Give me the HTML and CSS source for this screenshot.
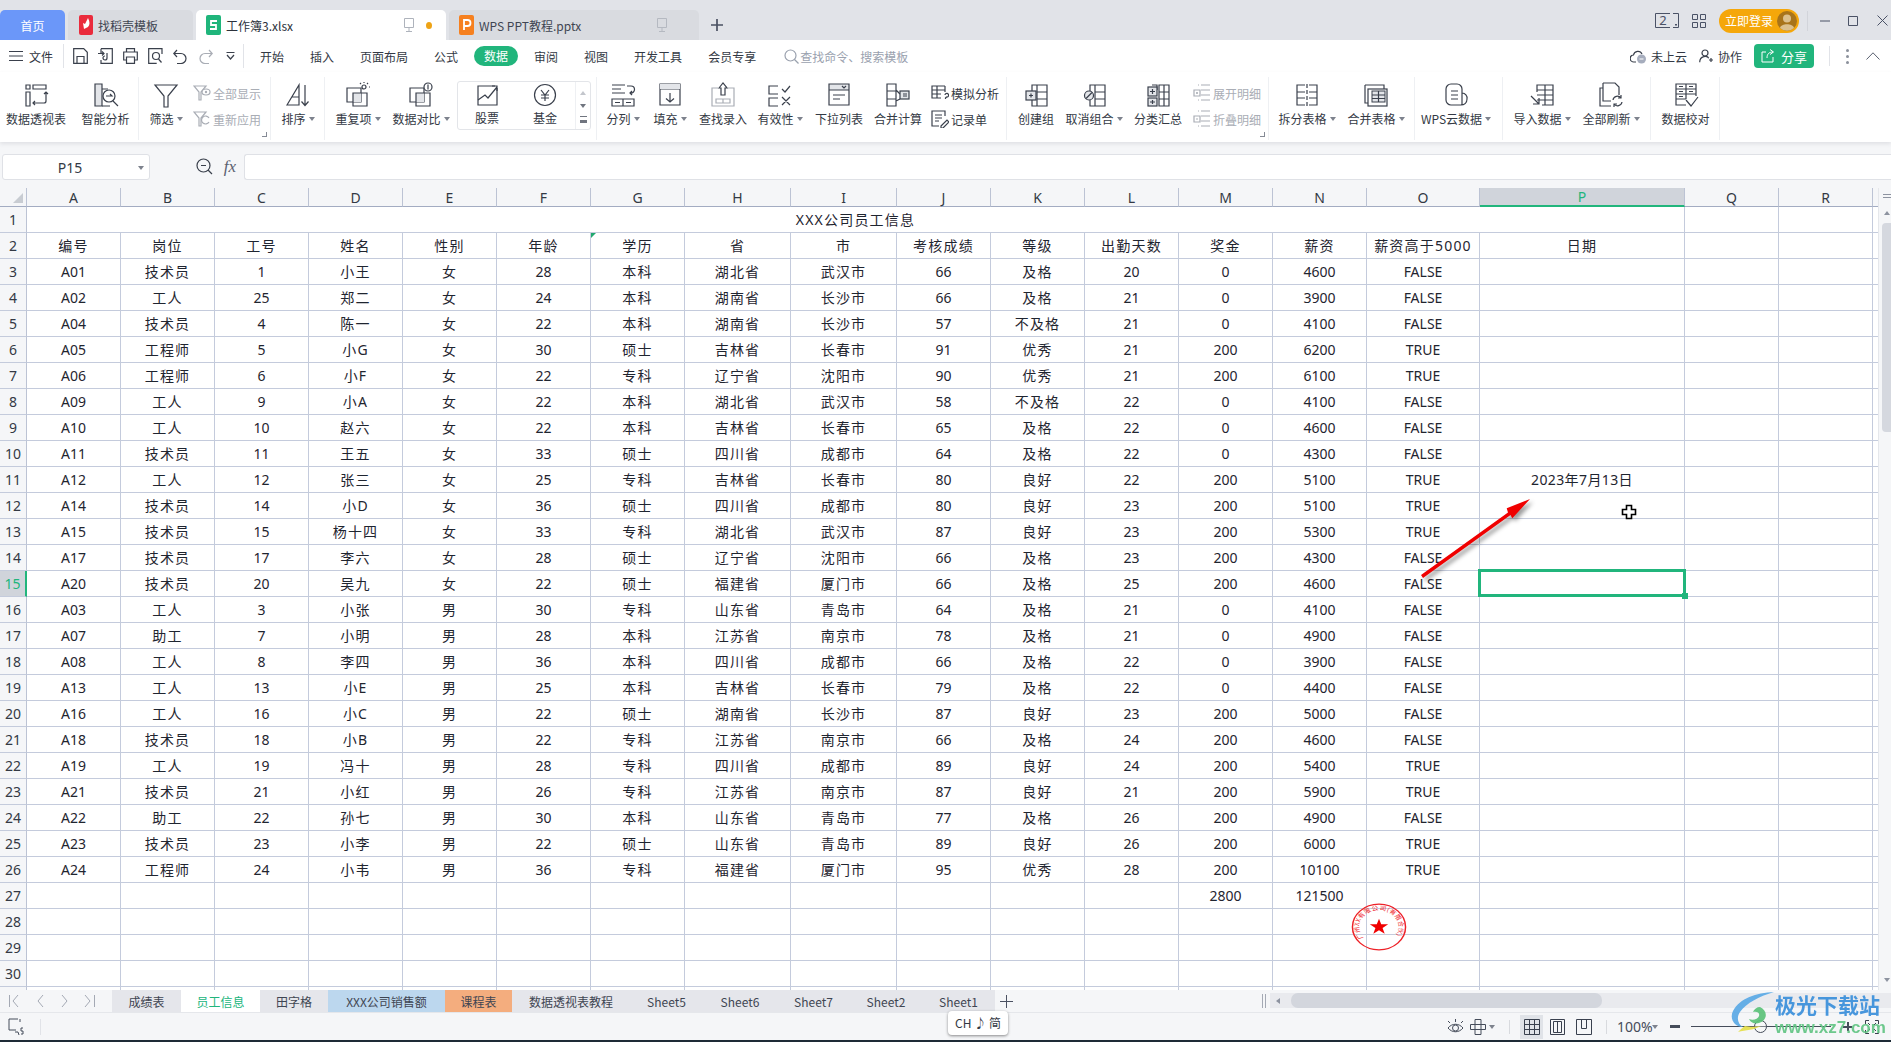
FILE: index.html
```html
<!DOCTYPE html>
<html lang="zh-CN">
<head>
<meta charset="utf-8">
<title>工作簿3.xlsx</title>
<link rel="stylesheet" href="styles.css">
</head>
<body>
<div class="tabbar">
  <div class="tab home">首页</div>
  <div class="tab t-tpl"><svg class="fileic" width="14" height="20" viewBox="0 0 14 20"><rect width="14" height="20" rx="2" fill="#ea2b3c"/><path d="M9 3 6 9l-2-1 1 6 4-2c2-2 2-5 0-9z" fill="#fff"/></svg><span>找稻壳模板</span></div>
  <div class="tab active"><svg class="fileic" width="15" height="20" viewBox="0 0 15 20"><rect width="15" height="20" rx="2" fill="#1fb57b"/><path d="M11 6H5v4h5v4H4" fill="none" stroke="#fff" stroke-width="1.8"/></svg><span>工作簿3.xlsx</span><svg class="mon m-a" width="12" height="16" viewBox="0 0 12 16"><path d="M1.500 1.500h9v9h-9zM6 11v3M3 14.500h6" fill="none" stroke="#aeb3bc"/></svg><i class="dot"></i></div>
  <div class="tab t-ppt"><svg class="fileic" width="15" height="20" viewBox="0 0 15 20"><rect width="15" height="20" rx="2" fill="#f6801f"/><path d="M5 15V5h3.500a2.800 2.800 0 0 1 0 6H5" fill="none" stroke="#fff" stroke-width="1.8"/></svg><span>WPS PPT教程.pptx</span><svg class="mon m-b" width="12" height="16" viewBox="0 0 12 16"><path d="M1.500 1.500h9v9h-9zM6 11v3M3 14.500h6" fill="none" stroke="#b5b9c1"/></svg></div>
  <svg class="plus" width="14" height="14" viewBox="0 0 14 14"><path d="M7 1v12M1 7h12" stroke="#4a5162" stroke-width="1.700"/></svg>
  <div class="tabright">
    <svg width="24" height="15" viewBox="0 0 24 15"><path d="M15 .5H.5v14H15M18 .5h5.500v14H18" fill="none" stroke="#4a5266"/><rect x="20" y="11" width="2" height="1.500" fill="#4a5266"/><text x="8" y="12" class="svgtxt" text-anchor="middle">2</text></svg>
    <svg class="apps" width="14" height="14" viewBox="0 0 14 14"><path d="M.5.500h5v5h-5zM8.500.500h5v5h-5zM.5 8.500h5v5h-5zM8.500 8.500h5v5h-5z" fill="none" stroke="#4a5266"/></svg>
    <div class="login"><span>立即登录</span><svg width="20" height="20" viewBox="0 0 20 20"><circle cx="10" cy="10" r="10" fill="#a8741a"/><circle cx="10" cy="7.500" r="4" fill="#dcc08c"/><path d="M3 17c1-5 13-5 14 0a10 10 0 0 1-14 0z" fill="#dcc08c"/></svg></div>
    <i class="vsep sep-win"></i>
    <svg class="win w1" width="10" height="2" viewBox="0 0 10 2"><path d="M0 1h10" stroke="#4a5266"/></svg>
    <svg class="win w2" width="10" height="10" viewBox="0 0 10 10"><path d="M.5.500h9v9h-9z" fill="none" stroke="#4a5266"/></svg>
    <svg class="win w3" width="11" height="11" viewBox="0 0 11 11"><path d="M.5.500l10 10M10.500.500l-10 10" stroke="#4a5266"/></svg>
  </div>
</div>

<div class="menubar">
  <svg class="m-burger" width="14" height="10" viewBox="0 0 14 10"><path d="M0 .5h14M0 5h14M0 9.500h14" stroke="#3a404c"/></svg>
  <span class="m-file">文件</span>
  <i class="vsep sep-a"></i>
  <div class="quick">
    <svg width="15" height="16" viewBox="0 0 15 16"><path d="M.7.700h10l3.600 3.600v11H.7zM4 15V8.500h7V15" class="ic"/></svg>
    <svg width="15" height="16" viewBox="0 0 15 16"><path d="M3 .7h11.300v14.600H3V12M3 5V.7M0 5.500h6M4 3.500l2 2-2 2M9 5v5a2 2 0 1 1-2-2" class="ic"/></svg>
    <svg width="15" height="16" viewBox="0 0 15 16"><path d="M3.500 4V.7h8V4M3.500 12H.7V4h13.600v8h-2.800M3.500 9h8v6.300h-8z" class="ic"/></svg>
    <svg width="15" height="16" viewBox="0 0 15 16"><path d="M14 6V.7H.7v14.600h8" class="ic"/><circle cx="8" cy="8" r="3.500" class="ic"/><path d="M10.500 11l3 3.500" class="ic"/></svg>
    <svg class="q-undo" width="14" height="15" viewBox="0 0 14 15"><path d="M4 1 .8 4.500 4 8M1 4.500h7a5 5 0 0 1 0 10H4" class="ic"/></svg>
    <svg class="q-redo" width="14" height="15" viewBox="0 0 14 15"><path d="M10 1l3.200 3.500L10 8M13 4.500H6a5 5 0 0 0 0 10h4" class="ic grey"/></svg>
    <svg class="q-more" width="9" height="8" viewBox="0 0 9 8"><path d="M.5.500h8M1 3l3.500 4L8 3" class="ic"/></svg>
  </div>
  <i class="vsep sep-b"></i>
  <nav class="nav">
    <span>开始</span><span>插入</span><span>页面布局</span><span>公式</span><span class="pill">数据</span><span>审阅</span><span>视图</span><span>开发工具</span><span>会员专享</span>
  </nav>
  <div class="search"><svg width="15" height="15" viewBox="0 0 15 15"><circle cx="6.500" cy="6.500" r="5.500" fill="none" stroke="#9aa1ae" stroke-width="1.200"/><path d="M10.500 10.500l4 4" stroke="#9aa1ae" stroke-width="1.200"/></svg><span>查找命令、搜索模板</span></div>
  <div class="menuright">
    <svg width="16" height="15" viewBox="0 0 16 15"><path d="M6 13H4a3.500 3.500 0 0 1-.5-7A4.500 4.500 0 0 1 12 5" class="ic"/><circle cx="11.500" cy="10" r="4.500" fill="#a6adbd"/><path d="M9.500 10h4" stroke="#fff"/></svg>
    <span class="mr1">未上云</span>
    <svg class="mr-col" width="14" height="14" viewBox="0 0 14 14"><circle cx="6" cy="4" r="3" class="ic"/><path d="M.7 13.300c0-7 8-7 9 -4M10 11h4M12 9v4" class="ic"/></svg>
    <span class="mr1">协作</span>
    <div class="share"><svg width="14" height="14" viewBox="0 0 14 14"><path d="M5 3H1v10h11V8M6 9c0-4 2-6 6-6M9 .5 12.500 3 9 5.500" fill="none" stroke="#fff"/></svg><span>分享</span></div>
    <i class="vsep sep-c"></i>
    <div class="dots"><i></i><i></i><i></i></div>
    <svg class="collapse" width="14" height="8" viewBox="0 0 14 8"><path d="M.5 7.500 7 .8l6.500 6.700" fill="none" stroke="#5a6070"/></svg>
  </div>
</div>

<div class="ribbon">
  <section class="grp w139">
    <div class="it w72"><svg class="rb" width="26" height="26" viewBox="0 0 26 26"><path d="M3 3h4v4H3zM10 3h13v4H10zM3 10h4v14H3zM23 10v9a2 2 0 0 1-2 2H10M21 12l2-2 2 2M12 19l-2 2 2 2" class="ic"/></svg><label>数据透视表</label></div>
    <div class="it w67"><svg class="rb" width="26" height="26" viewBox="0 0 26 26"><path d="M2 2h7v22H2z" class="ic fillg"/><path d="M9 7h6M9 24h8" class="ic"/><circle cx="16" cy="14" r="6" class="ic"/><path d="M20 19l5 5M13 14h6l-2-2" class="ic"/></svg><label>智能分析</label></div>
  </section>
  <section class="grp w132 rel">
    <div class="it w54"><svg class="rb" width="26" height="26" viewBox="0 0 26 26"><path d="M2 3h22L15 14v11h-4V14z" class="ic"/></svg><label>筛选<i class="caret"></i></label></div>
    <div class="smallcol">
      <div class="sm dis"><svg width="18" height="18" viewBox="0 0 18 18"><path d="M1 2h12L8 8v8H6V8z" class="ic grey"/><ellipse cx="13" cy="8" rx="4" ry="3" class="ic grey"/><circle cx="13" cy="8" r="1.200" fill="#a9adb5"/></svg><span>全部显示</span></div>
      <div class="sm dis"><svg width="18" height="18" viewBox="0 0 18 18"><path d="M1 2h12L8 8v8H6V8z" class="ic grey"/><path d="M16 8a4 4 0 1 0 0 4" class="ic grey"/></svg><span>重新应用</span></div>
    </div>
    <i class="launch"></i>
  </section>
  <section class="grp w54">
    <div class="it w54"><svg class="rb" width="26" height="26" viewBox="0 0 26 26"><path d="M2 23 14 3v20zM7 15h7M20 3v20M16.500 19.500 20 23.500l3.500-4" class="ic"/></svg><label>排序<i class="caret"></i></label></div>
  </section>
  <section class="grp w272">
    <div class="it w66"><svg class="rb rbw" width="26" height="26" viewBox="0 0 26 26"><path d="M2 6h14v14H2z" class="ic"/><path d="M8 11h8v9H8z" fill="#e3e5e9"/><path d="M8 11h14v13H8z" class="ic"/><circle cx="19" cy="5" r="2" class="ic"/><path d="M19 0v1M24 5h1M23 1l-1 1M15 1l1 1" class="ic"/></svg><label>重复项<i class="caret"></i></label></div>
    <div class="it w60"><svg class="rb rbw" width="26" height="26" viewBox="0 0 26 26"><path d="M2 6h14v14H2z" class="ic"/><path d="M8 11h8v9H8z" fill="#e3e5e9"/><path d="M8 11h14v13H8z" class="ic"/><circle cx="20" cy="5" r="4" fill="#fff" stroke="#3a404c" stroke-width="1.200"/><path d="M20 2.500v5" class="ic"/></svg><label>数据对比<i class="caret"></i></label></div>
    <div class="gallery">
      <div class="it w58"><svg class="rb" width="26" height="26" viewBox="0 0 26 26"><path d="M21 4H4v19h19V6" class="ic"/><path d="M4 18l7-5 3 3 9-11M18 4h5v5" class="ic"/></svg><label>股票</label></div>
      <div class="it w58"><svg class="rb" width="26" height="26" viewBox="0 0 26 26"><circle cx="13" cy="13" r="10.500" class="ic"/><path d="M9 8l4 5 4-5M13 13v6M9 13h8M9 16h8" class="ic"/></svg><label>基金</label></div>
      <div class="gscroll"><i class="up"></i><i class="down"></i><i class="more"></i></div>
    </div>
  </section>
  <section class="grp w410">
    <div class="it w50 ml2"><svg class="rb rbw" width="26" height="26" viewBox="0 0 26 26"><path d="M2 3h13M2 7h9M2 11h13M17 4h4a3 3 0 0 1 0 7h-1M22 9l-2 2 2 2M2 17h22v7H2zM13 17v7M5 20.500h5M16 20.500h5" class="ic"/></svg><label>分列<i class="caret"></i></label></div>
    <div class="it w42"><svg class="rb" width="26" height="26" viewBox="0 0 26 26"><path d="M3 2h20v21H3zM3 7h20" class="ic"/><rect x="3" y="2" width="20" height="5" fill="#e3e5e9"/><path d="M13 11v9M9 16.500l4 3.500 4-3.500" class="ic"/></svg><label>填充<i class="caret"></i></label></div>
    <div class="it w64"><svg class="rb rbw" width="26" height="26" viewBox="0 0 26 26"><path d="M8 6H2v18h22V6h-6M6 17h14v4H6zM13 17v4" class="icg"/><path d="M9 6l4-5 4 5h-2v7h-4V6z" class="ic"/></svg><label>查找录入</label></div>
    <div class="it w50"><svg class="rb rbw" width="26" height="26" viewBox="0 0 26 26"><path d="M11 4H2v8h9M11 16H2v8h9M15 7l3 3 5-6M15 15l8 8M23 15l-8 8" class="ic"/></svg><label>有效性<i class="caret"></i></label></div>
    <div class="it w68"><svg class="rb" width="26" height="26" viewBox="0 0 26 26"><rect x="3" y="2" width="20" height="6" fill="#e3e5e9"/><path d="M3 2h20v21H3zM3 8h20M7 13h12M7 17h7M16 4l2 2 2-2" class="ic"/></svg><label>下拉列表</label></div>
    <div class="it w50"><svg class="rb rbw" width="26" height="26" viewBox="0 0 26 26"><path d="M2 2h9v22H2zM2 9h9M2 17h9M11 8l4 4M11 19l4-2" class="ic"/><rect x="15" y="9" width="9" height="8" fill="#e3e5e9" stroke="#3a404c" stroke-width="1.200"/><path d="M18 12h4M18 14h4" class="ic"/></svg><label>合并计算</label></div>
    <div class="smallcol sc8">
      <div class="sm"><svg width="18" height="18" viewBox="0 0 18 18"><path d="M14 2H1v12h9M14 2v6M1 6h13M6 2v12M1 10h9M14 11a1.800 1.800 0 1 1 1.500 2l-1 1v1" class="ic"/></svg><span>模拟分析</span></div>
      <div class="sm"><svg width="18" height="18" viewBox="0 0 18 18"><path d="M14 6V1H1v15h7M4 5h7M4 8h7M4 11h4M10 16l6-6 2 2-6 6h-2z" class="ic"/></svg><span>记录单</span></div>
    </div>
  </section>
  <section class="grp w262 rel">
    <div class="it w58"><svg class="rb" width="26" height="26" viewBox="0 0 26 26"><path d="M14 3h10v21H14zM14 10h10M14 17h10M14 3H9v6M14 24H9v-6" class="ic"/><rect x="3" y="9" width="10" height="9" fill="#e3e5e9" stroke="#3a404c" stroke-width="1.200"/><path d="M6 13.500h4M8 11.500v4" class="ic"/></svg><label>创建组</label></div>
    <div class="it w58"><svg class="rb" width="26" height="26" viewBox="0 0 26 26"><path d="M14 3h10v21H14zM14 10h10M14 17h10M14 3H9v6M14 24H9v-6" class="ic"/><circle cx="8" cy="13.500" r="4.500" fill="#e3e5e9" stroke="#3a404c" stroke-width="1.200"/><path d="M5 16.500l6-6" class="ic"/></svg><label>取消组合<i class="caret"></i></label></div>
    <div class="it w70"><svg class="rb" width="26" height="26" viewBox="0 0 26 26"><path d="M14 3h10v21H14zM19 3v21M14 10h10M14 17h10M7 3h5v5" class="ic"/><rect x="3" y="5" width="9" height="9" fill="#e3e5e9" stroke="#3a404c" stroke-width="1.200"/><rect x="3" y="16" width="9" height="8" fill="#e3e5e9" stroke="#3a404c" stroke-width="1.200"/><path d="M5 9.500h5M7.500 7v5M5 20h5M7.500 18v4" class="ic"/></svg><label>分类汇总</label></div>
    <div class="smallcol">
      <div class="sm dis"><svg width="18" height="18" viewBox="0 0 18 18"><path d="M8 1h9M8 6h9M8 11h9M8 16h9M5 1h1M5 16h1M1 6h6v6H1zM3 9h2M4 8v2" class="icg"/></svg><span>展开明细</span></div>
      <div class="sm dis"><svg width="18" height="18" viewBox="0 0 18 18"><path d="M8 1h9M8 6h9M8 11h9M8 16h9M5 1h1M5 16h1M1 6h6v6H1zM3 9h2" class="icg"/></svg><span>折叠明细</span></div>
    </div>
    <i class="launch"></i>
  </section>
  <section class="grp w146">
    <div class="it w76"><svg class="rb" width="26" height="26" viewBox="0 0 26 26"><path d="M11 3H3v20h8M15 3h8v20h-8M3 10h8M3 16h8M15 10h8M15 16h8" class="ic"/><path d="M13 2v22" class="ic dash"/></svg><label>拆分表格<i class="caret"></i></label></div>
    <div class="it w62"><svg class="rb" width="26" height="26" viewBox="0 0 26 26"><path d="M2 3h19v19" class="ic"/><path d="M2 3v18h3" class="ic"/><rect x="5" y="7" width="19" height="17" fill="#fff" stroke="#3a404c" stroke-width="1.200"/><rect x="9" y="9" width="13" height="11" fill="#e3e5e9" stroke="#3a404c"/><path d="M9 13h13M9 16.500h13M15.500 9v11" class="ic"/></svg><label>合并表格<i class="caret"></i></label></div>
  </section>
  <section class="grp w88">
    <div class="it w82"><svg class="rb" width="26" height="26" viewBox="0 0 26 26"><path d="M8 2h6a5 5 0 0 1 5 5v4a5 5 0 0 1 5 6c0 4-3 6-6 6H8a5 5 0 0 1-5-5V7a5 5 0 0 1 5-5zM19 11v12M8 9h7M8 13h7M8 17h7" class="ic"/></svg><label>WPS云数据<i class="caret"></i></label></div>
  </section>
  <section class="grp w148">
    <div class="it w78"><svg class="rb" width="26" height="26" viewBox="0 0 26 26"><path d="M8 10V3h16v20H13M8 8h16M8 13h16M8 18h16M16 3v20" class="ic"/><path d="M2 14l8 8M4 22h6v-6" class="ic"/></svg><label>导入数据<i class="caret"></i></label></div>
    <div class="it w60"><svg class="rb" width="26" height="26" viewBox="0 0 26 26"><path d="M5 6H2v18h11M5 1h12l4 4v8M5 1v18h8" class="ic"/><path d="M15 18a4.500 4.500 0 0 1 8-2M24 20a4.500 4.500 0 0 1-8 2M23 13v3h-3M16 25v-3h3" class="ic"/></svg><label>全部刷新<i class="caret"></i></label></div>
  </section>
  <section class="grp w69">
    <div class="it w69"><svg class="rb" width="26" height="26" viewBox="0 0 26 26"><path d="M13 23H3V2h20v12M3 7h20M3 12h20M3 17h10M13 2v15M6 4.500h4M16 4.500h4M6 9.500h4M16 9.500h4M6 14.500h4M13 18l5 6 7-9" class="ic"/></svg><label>数据校对</label></div>
  </section>
</div>

<div class="formula">
  <div class="namebox"><span>P15</span><i class="caret"></i></div>
  <svg class="zoomic" width="17" height="17" viewBox="0 0 17 17"><circle cx="7.500" cy="7.500" r="6.500" class="ic"/><path d="M5 7.500h5M12 12l4 4" class="ic"/></svg>
  <span class="fx">fx</span>
  <div class="fxinput"></div>
</div>

<div class="sheetrow">
  <div class="gridwrap">
    <table class="grid">
      <colgroup><col class="col-h"><col class="col-n"><col class="col-n"><col class="col-n"><col class="col-n"><col class="col-n"><col class="col-n"><col class="col-n"><col class="col-w"><col class="col-w"><col class="col-n"><col class="col-n"><col class="col-n"><col class="col-n"><col class="col-n"><col class="col-o"><col class="col-p"><col class="col-n"><col class="col-n"><col class="col-t"></colgroup>
      <thead><tr><th class="corner"><i></i></th><th>A</th><th>B</th><th>C</th><th>D</th><th>E</th><th>F</th><th>G</th><th>H</th><th>I</th><th>J</th><th>K</th><th>L</th><th>M</th><th>N</th><th>O</th><th class="hsel">P</th><th>Q</th><th>R</th><th></th></tr></thead>
      <tbody>
<tr><th>1</th><td colspan="16">XXX公司员工信息</td><td></td><td></td><td></td></tr>
<tr><th>2</th><td>编号</td><td>岗位</td><td>工号</td><td>姓名</td><td>性别</td><td>年龄</td><td class="flag">学历</td><td>省</td><td>市</td><td>考核成绩</td><td>等级</td><td>出勤天数</td><td>奖金</td><td>薪资</td><td>薪资高于5000</td><td>日期</td><td></td><td></td><td></td></tr>
<tr><th>3</th><td>A01</td><td>技术员</td><td>1</td><td>小王</td><td>女</td><td>28</td><td>本科</td><td>湖北省</td><td>武汉市</td><td>66</td><td>及格</td><td>20</td><td>0</td><td>4600</td><td>FALSE</td><td></td><td></td><td></td><td></td></tr>
<tr><th>4</th><td>A02</td><td>工人</td><td>25</td><td>郑二</td><td>女</td><td>24</td><td>本科</td><td>湖南省</td><td>长沙市</td><td>66</td><td>及格</td><td>21</td><td>0</td><td>3900</td><td>FALSE</td><td></td><td></td><td></td><td></td></tr>
<tr><th>5</th><td>A04</td><td>技术员</td><td>4</td><td>陈一</td><td>女</td><td>22</td><td>本科</td><td>湖南省</td><td>长沙市</td><td>57</td><td>不及格</td><td>21</td><td>0</td><td>4100</td><td>FALSE</td><td></td><td></td><td></td><td></td></tr>
<tr><th>6</th><td>A05</td><td>工程师</td><td>5</td><td>小G</td><td>女</td><td>30</td><td>硕士</td><td>吉林省</td><td>长春市</td><td>91</td><td>优秀</td><td>21</td><td>200</td><td>6200</td><td>TRUE</td><td></td><td></td><td></td><td></td></tr>
<tr><th>7</th><td>A06</td><td>工程师</td><td>6</td><td>小F</td><td>女</td><td>22</td><td>专科</td><td>辽宁省</td><td>沈阳市</td><td>90</td><td>优秀</td><td>21</td><td>200</td><td>6100</td><td>TRUE</td><td></td><td></td><td></td><td></td></tr>
<tr><th>8</th><td>A09</td><td>工人</td><td>9</td><td>小A</td><td>女</td><td>22</td><td>本科</td><td>湖北省</td><td>武汉市</td><td>58</td><td>不及格</td><td>22</td><td>0</td><td>4100</td><td>FALSE</td><td></td><td></td><td></td><td></td></tr>
<tr><th>9</th><td>A10</td><td>工人</td><td>10</td><td>赵六</td><td>女</td><td>22</td><td>本科</td><td>吉林省</td><td>长春市</td><td>65</td><td>及格</td><td>22</td><td>0</td><td>4600</td><td>FALSE</td><td></td><td></td><td></td><td></td></tr>
<tr><th>10</th><td>A11</td><td>技术员</td><td>11</td><td>王五</td><td>女</td><td>33</td><td>硕士</td><td>四川省</td><td>成都市</td><td>64</td><td>及格</td><td>22</td><td>0</td><td>4300</td><td>FALSE</td><td></td><td></td><td></td><td></td></tr>
<tr><th>11</th><td>A12</td><td>工人</td><td>12</td><td>张三</td><td>女</td><td>25</td><td>专科</td><td>吉林省</td><td>长春市</td><td>80</td><td>良好</td><td>22</td><td>200</td><td>5100</td><td>TRUE</td><td>2023年7月13日</td><td></td><td></td><td></td></tr>
<tr><th>12</th><td>A14</td><td>技术员</td><td>14</td><td>小D</td><td>女</td><td>36</td><td>硕士</td><td>四川省</td><td>成都市</td><td>80</td><td>良好</td><td>23</td><td>200</td><td>5100</td><td>TRUE</td><td></td><td></td><td></td><td></td></tr>
<tr><th>13</th><td>A15</td><td>技术员</td><td>15</td><td>杨十四</td><td>女</td><td>33</td><td>专科</td><td>湖北省</td><td>武汉市</td><td>87</td><td>良好</td><td>23</td><td>200</td><td>5300</td><td>TRUE</td><td></td><td></td><td></td><td></td></tr>
<tr><th>14</th><td>A17</td><td>技术员</td><td>17</td><td>李六</td><td>女</td><td>28</td><td>硕士</td><td>辽宁省</td><td>沈阳市</td><td>66</td><td>及格</td><td>23</td><td>200</td><td>4300</td><td>FALSE</td><td></td><td></td><td></td><td></td></tr>
<tr><th class="rsel">15</th><td>A20</td><td>技术员</td><td>20</td><td>吴九</td><td>女</td><td>22</td><td>硕士</td><td>福建省</td><td>厦门市</td><td>66</td><td>及格</td><td>25</td><td>200</td><td>4600</td><td>FALSE</td><td class="sel"></td><td></td><td></td><td></td></tr>
<tr><th>16</th><td>A03</td><td>工人</td><td>3</td><td>小张</td><td>男</td><td>30</td><td>专科</td><td>山东省</td><td>青岛市</td><td>64</td><td>及格</td><td>21</td><td>0</td><td>4100</td><td>FALSE</td><td></td><td></td><td></td><td></td></tr>
<tr><th>17</th><td>A07</td><td>助工</td><td>7</td><td>小明</td><td>男</td><td>28</td><td>本科</td><td>江苏省</td><td>南京市</td><td>78</td><td>及格</td><td>21</td><td>0</td><td>4900</td><td>FALSE</td><td></td><td></td><td></td><td></td></tr>
<tr><th>18</th><td>A08</td><td>工人</td><td>8</td><td>李四</td><td>男</td><td>36</td><td>本科</td><td>四川省</td><td>成都市</td><td>66</td><td>及格</td><td>22</td><td>0</td><td>3900</td><td>FALSE</td><td></td><td></td><td></td><td></td></tr>
<tr><th>19</th><td>A13</td><td>工人</td><td>13</td><td>小E</td><td>男</td><td>25</td><td>本科</td><td>吉林省</td><td>长春市</td><td>79</td><td>及格</td><td>22</td><td>0</td><td>4400</td><td>FALSE</td><td></td><td></td><td></td><td></td></tr>
<tr><th>20</th><td>A16</td><td>工人</td><td>16</td><td>小C</td><td>男</td><td>22</td><td>硕士</td><td>湖南省</td><td>长沙市</td><td>87</td><td>良好</td><td>23</td><td>200</td><td>5000</td><td>FALSE</td><td></td><td></td><td></td><td></td></tr>
<tr><th>21</th><td>A18</td><td>技术员</td><td>18</td><td>小B</td><td>男</td><td>22</td><td>专科</td><td>江苏省</td><td>南京市</td><td>66</td><td>及格</td><td>24</td><td>200</td><td>4600</td><td>FALSE</td><td></td><td></td><td></td><td></td></tr>
<tr><th>22</th><td>A19</td><td>工人</td><td>19</td><td>冯十</td><td>男</td><td>28</td><td>专科</td><td>四川省</td><td>成都市</td><td>89</td><td>良好</td><td>24</td><td>200</td><td>5400</td><td>TRUE</td><td></td><td></td><td></td><td></td></tr>
<tr><th>23</th><td>A21</td><td>技术员</td><td>21</td><td>小红</td><td>男</td><td>26</td><td>专科</td><td>江苏省</td><td>南京市</td><td>87</td><td>良好</td><td>21</td><td>200</td><td>5900</td><td>TRUE</td><td></td><td></td><td></td><td></td></tr>
<tr><th>24</th><td>A22</td><td>助工</td><td>22</td><td>孙七</td><td>男</td><td>30</td><td>本科</td><td>山东省</td><td>青岛市</td><td>77</td><td>及格</td><td>26</td><td>200</td><td>4900</td><td>FALSE</td><td></td><td></td><td></td><td></td></tr>
<tr><th>25</th><td>A23</td><td>技术员</td><td>23</td><td>小李</td><td>男</td><td>22</td><td>硕士</td><td>山东省</td><td>青岛市</td><td>89</td><td>良好</td><td>26</td><td>200</td><td>6000</td><td>TRUE</td><td></td><td></td><td></td><td></td></tr>
<tr><th>26</th><td>A24</td><td>工程师</td><td>24</td><td>小韦</td><td>男</td><td>36</td><td>专科</td><td>福建省</td><td>厦门市</td><td>95</td><td>优秀</td><td>28</td><td>200</td><td>10100</td><td>TRUE</td><td></td><td></td><td></td><td></td></tr>
<tr><th>27</th><td></td><td></td><td></td><td></td><td></td><td></td><td></td><td></td><td></td><td></td><td></td><td></td><td>2800</td><td>121500</td><td></td><td></td><td></td><td></td><td></td></tr>
<tr><th>28</th><td></td><td></td><td></td><td></td><td></td><td></td><td></td><td></td><td></td><td></td><td></td><td></td><td></td><td></td><td></td><td></td><td></td><td></td><td></td></tr>
<tr><th>29</th><td></td><td></td><td></td><td></td><td></td><td></td><td></td><td></td><td></td><td></td><td></td><td></td><td></td><td></td><td></td><td></td><td></td><td></td><td></td></tr>
<tr><th>30</th><td></td><td></td><td></td><td></td><td></td><td></td><td></td><td></td><td></td><td></td><td></td><td></td><td></td><td></td><td></td><td></td><td></td><td></td><td></td></tr>
<tr><th></th><td></td><td></td><td></td><td></td><td></td><td></td><td></td><td></td><td></td><td></td><td></td><td></td><td></td><td></td><td></td><td></td><td></td><td></td><td></td></tr>
      </tbody>
    </table>
  </div>
  <div class="vscroll"><i class="split"></i><i class="up"></i><i class="thumb"></i><i class="down"></i></div>
</div>

<div class="sheetbar">
  <div class="sheetnav">
    <svg width="112" height="14" viewBox="0 0 112 14"><path d="M9.500 1v12M18 1l-5 6 5 6M43 1l-5 6 5 6M62 1l5 6-5 6M85 1l5 6-5 6M94.500 1v12" fill="none" stroke="#a4a9b4"/></svg>
  </div>
  <div class="sheets">
    <span class="st s69">成绩表</span><span class="st s79 cur">员工信息</span><span class="st s68">田字格</span><span class="st s117 blue">XXX公司销售额</span><span class="st s67 orange">课程表</span><span class="st s118">数据透视表教程</span><span class="st s73">Sheet5</span><span class="st s74">Sheet6</span><span class="st s73">Sheet7</span><span class="st s72">Sheet2</span><span class="st s73">Sheet1</span>
  </div>
  <svg class="addsheet" width="13" height="13" viewBox="0 0 13 13"><path d="M6.500 0v13M0 6.500h13" stroke="#4a5162"/></svg>
  <div class="hsplit"></div>
  <div class="htrack"><i class="left"></i><i class="hthumb"></i></div>
</div>

<footer class="status">
  <svg class="js" width="17" height="18" viewBox="0 0 17 18"><path d="M10 1H1v11h7M12 1v3M7 14h3l1 3M15 10h-2v3h2v3h-2" fill="none" stroke="#454c5a"/></svg>
  <i class="vsep sep-d"></i>
  <div class="statusright">
    <svg width="17" height="17" viewBox="0 0 17 17"><path d="M1 10c4-5 11-5 15 0-4 5-11 5-15 0zM1 3l2 2M16 3l-2 2M8.500 1v3" fill="none" stroke="#454c5a"/><circle cx="8.500" cy="10" r="3" fill="none" stroke="#454c5a"/></svg>
    <svg class="s-cross" width="16" height="16" viewBox="0 0 16 16"><path d="M5 .5h6v5h4.500v5H11v5H5v-5H.5v-5H5zM5 5.500h6v5H5z" fill="none" stroke="#454c5a"/></svg>
    <i class="caret cr-s"></i>
    <i class="vsep sep-e"></i>
    <div class="view-on"><svg width="16" height="16" viewBox="0 0 16 16"><path d="M.5.500h15v15H.5zM.5 5.500h15M.5 10.500h15M5.500.5v15M10.500.5v15" fill="none" stroke="#39404e"/></svg></div>
    <svg class="v2" width="15" height="16" viewBox="0 0 15 16"><path d="M.5.500h14v15H.5zM3.500 2.500h8v11h-8zM7.500 2.500v11" fill="none" stroke="#39404e"/></svg>
    <svg class="v3" width="16" height="16" viewBox="0 0 16 16"><path d="M.5.500h15v15H.5zM5.500.5v9h5V.5" fill="none" stroke="#39404e"/></svg>
    <i class="vsep sep-f"></i>
    <span class="pct">100%</span><i class="caret cr-p"></i>
    <i class="zminus"></i>
    <div class="slider"><i></i></div>
    <i class="zplus"></i>
    <svg class="fullsc" width="14" height="14" viewBox="0 0 14 14"><path d="M.5 4V.5H4M10 .5h3.500V4M13.500 10v3.500H10M4 13.500H.5V10M3 3l2 2M11 3 9 5M11 11 9 9M3 11l2-2" fill="none" stroke="#39404e"/></svg>
  </div>
</footer>
<div class="strip"></div>

<div class="ime">CH ♪ 简</div>

<svg class="arrow" width="130" height="100" viewBox="0 0 130 100"><path d="M11 85 98 22.500 96.700 18.300 120 9 102.300 28.300 100.500 25 13 88z" fill="#f00000"/></svg>

<svg class="cursor" width="16" height="16" viewBox="0 0 16 16"><path d="M5.500 1.500h5v4h4v5h-4v4h-5v-4h-4v-5h4z" fill="#fff" stroke="#000" stroke-width="1.600"/></svg>

<svg class="stamp" width="56" height="48" viewBox="0 0 58 58" preserveAspectRatio="none">
  <defs><path id="stamparc" d="M13 42A20.500 20.500 0 1 1 45 42"/></defs>
  <circle cx="29" cy="29" r="27.500" fill="none" stroke="#ee2027" stroke-width="1.500"/>
  <text class="stamptext"><textPath href="#stamparc" textLength="88" lengthAdjust="spacing">广州XX有限公司(有限合伙)</textPath></text>
  <path d="M29 19l2.300 6.800h7.200l-5.800 4.300 2.200 7L29 32.800l-5.900 4.300 2.200-7-5.800-4.300h7.200z" fill="#f00000"/>
</svg>

<div class="watermark">
  <svg width="46" height="42" viewBox="0 0 46 42"><path d="M44 1C26 2 10 7 3 20c-4 8 2 16 10 16-5-3-7-9-3-15C16 12 30 5 44 1z" fill="#5aa9e6"/><path d="M30 16c6 3 8 9 3 14-5 4-12 3-14-2 4 2 9 0 10-3 1-3-2-5-6-4 1-3 4-5 7-5z" fill="#5cc27a"/><path d="M8 41c8-2 16-2 23-6-5 1-12 1-16 0-3 2-5 4-7 6z" fill="#e6e04a"/></svg>
  <div class="wmtext"><b>极光下载站</b><em>www.xz7.com</em></div>
</div>
</body>
</html>
```
FILE: styles.css
```css
*{box-sizing:border-box}
html,body{margin:0;padding:0}
body{width:1891px;height:1042px;overflow:hidden;position:relative;background:#f5f6f8;color:#333944;font:12px "Noto Sans CJK SC","Noto Sans",sans-serif}
i{display:block;font-style:normal}
svg{display:block;flex:none}
.ic{fill:none;stroke:#3a404c;stroke-width:1.200}
.ic.grey,.icg{fill:none;stroke:#a9adb5;stroke-width:1.200}
.ic.fillg{fill:#e3e5e9}
.ic.dash{stroke-dasharray:4 2}
.svgtxt{font:13px "Noto Sans",sans-serif;fill:#4a5266}
.vsep{width:1px;background:#e1e3e8;flex:none}

/* tab bar */
.tabbar{height:40px;background:#e1e3e8;display:flex;align-items:flex-end}
.tab{height:30px;border-radius:5px 5px 0 0;display:flex;align-items:center;background:#d9dbe0;color:#3f4552;margin-right:3px;flex:none}
.home{width:65px;justify-content:center;background:#6b97f9;color:#fff}
.t-tpl{width:125px;padding-left:11px;gap:5px}
.active{width:250px;padding-left:10px;gap:5px;background:#fff;color:#2c313b}
.t-ppt{width:250px;padding-left:10px;gap:5px;color:#3f4552}
.m-a{margin-left:auto}
.m-b{margin:0 31px 0 auto}
.dot{width:6px;height:7px;border-radius:50%;background:#eea315;margin:0 14px 0 6px}
.plus{align-self:center;margin:10px 0 0 8px}
.tabright{margin-left:auto;align-self:stretch;display:flex;align-items:center;padding:1px 3px 0 0}
.apps{margin-left:13px}
.login{margin-left:13px;width:80px;height:24px;border-radius:12px;background:#f5a70a;color:#fff;display:flex;align-items:center;justify-content:space-between;font-size:12px;padding:0 2px 0 6px}
.login span{white-space:nowrap}
.sep-win{height:20px;background:#d2d4da;margin-left:8px}
.win.w1{margin-left:12px}
.win.w2{margin-left:18px}
.win.w3{margin-left:19px}

/* menu bar */
.menubar{height:32px;background:#fff;display:flex;align-items:center}
.m-burger{margin-left:9px}
.m-file{margin-left:6px;width:24px;color:#2f343e}
.sep-a{height:24px;margin-left:10px}
.quick{display:flex;align-items:center;gap:10px;margin-left:9px}
.q-redo{margin-left:2px}
.q-more{margin-left:3px}
.sep-b{height:24px;margin-left:8px}
.nav{display:flex;align-items:center;margin-left:3px;color:#333944}
.nav span{padding:0 13px;white-space:nowrap}
.nav .pill{margin:0 3px;padding:0 10px;height:20px;line-height:20px;border-radius:10px;background:#21b57c;color:#fff}
.search{display:flex;align-items:center;gap:1px;margin-left:15px;color:#9aa1ae}
.menuright{margin-left:auto;display:flex;align-items:center}
.mr1{margin-left:5px;color:#333944}
.mr-col{margin-left:12px}
.share{margin-left:12px;width:60px;height:24px;border-radius:4px;background:#21b57c;color:#fff;display:flex;align-items:center;justify-content:center;gap:6px;font-size:13px}
.sep-c{height:20px;margin-left:15px}
.dots{margin-left:16px;display:flex;flex-direction:column;gap:3px}
.dots i{width:3px;height:3px;background:#8b909b;border-radius:50%}
.collapse{margin:0 11px 0 17px}

/* ribbon */
.ribbon{height:70px;background:#fff;display:flex;align-items:flex-start;padding-top:5px;position:relative;z-index:2;box-shadow:0 2px 4px rgba(70,75,90,.12)}
.grp{height:63px;display:flex;border-right:1px solid #eef0f3;flex:none}
.rel{position:relative}
.it{display:flex;flex-direction:column;align-items:center;padding-top:5px;flex:none}
.rb{height:26px}
.rbw{width:26px}
.it label{height:22px;line-height:22px;white-space:nowrap;color:#333944;display:flex;align-items:center}
.caret{width:0;height:0;border-left:3px solid transparent;border-right:3px solid transparent;border-top:4px solid #7d828d;margin-left:3px}
.smallcol{padding-top:3px;flex:none;display:flex;flex-direction:column}
.sc8{margin-left:8px}
.sm{height:26px;display:flex;align-items:center;gap:2px;white-space:nowrap;color:#333944}
.sm.dis{color:#a9adb5}
.launch{position:absolute;right:3px;bottom:3px;width:5px;height:5px;border-right:1px solid #858a95;border-bottom:1px solid #858a95}
.w42{width:42px}.w50{width:50px}.w54{width:54px}.w58{width:58px}.w60{width:60px}.w62{width:62px}.w64{width:64px}.w66{width:66px}.w67{width:67px}.w68{width:68px}.w69{width:69px}.w70{width:70px}.w72{width:72px}.w76{width:76px}.w78{width:78px}.w82{width:82px}.w88{width:88px}.w132{width:132px}.w139{width:139px}.w146{width:146px}.w148{width:148px}.w262{width:262px}.w272{width:272px}.w410{width:410px}
.grp .it.ml2{width:52px}
.gallery{margin:4px 0 0 6px;width:134px;height:49px;border:1px solid #e3e5e9;border-radius:3px;display:flex;position:relative}
.gallery .it{padding-top:0;height:47px}
.gallery .it label{height:20px;line-height:20px}
.gscroll{width:16px;margin-left:1px;border-left:1px solid #eef0f3;display:flex;flex-direction:column;align-items:center;justify-content:space-between;padding:9px 0 6px}
.gscroll .up{border-left:3.500px solid transparent;border-right:3.500px solid transparent;border-bottom:4px solid #c3c6cc}
.gscroll .down{border-left:3.500px solid transparent;border-right:3.500px solid transparent;border-top:4px solid #70757f}
.gscroll .more{width:7px;height:7px;border-top:1px solid #70757f;border-bottom:3px solid #70757f}

/* formula */
.formula{height:46px;padding-top:12px;display:flex;align-items:flex-start}
.namebox{margin-left:2px;width:148px;height:26px;background:#fff;border:1px solid #dfe1e6;border-radius:3px;display:flex;align-items:center;font:14px "Noto Sans",sans-serif;color:#333944;position:relative;justify-content:center}
.namebox span{margin-right:12px}
.namebox .caret{position:absolute;right:5px;top:11px}
.zoomic{margin:4px 0 0 46px}
.fx{width:24px;margin-left:5px;font:italic 17px/26px "Liberation Serif",serif;color:#5a6070;text-align:center}
.fxinput{flex:1;margin-left:2px;height:26px;background:#fff;border:1px solid #dfe1e6;border-right:0;border-radius:3px 0 0 3px}

/* grid */
.sheetrow{height:802px;display:flex;background:#fff}
.gridwrap{width:1878px;height:802px;overflow:hidden;position:relative}
.grid{table-layout:fixed;width:1878px;border-collapse:separate;border-spacing:0;font:14px "Noto Sans","Noto Sans CJK SC",sans-serif;color:#1f2530}
.col-h{width:27px}.col-n{width:94px}.col-w{width:106px}.col-o{width:113px}.col-p{width:205px}.col-t{width:5px}
.grid td{height:26px;padding:1px 0 0;text-align:center;vertical-align:middle;line-height:18px;white-space:nowrap;border-right:1px solid #c4cbdc;border-bottom:1px solid #c4cbdc;position:relative;overflow:visible}
.grid tr>td:last-child{border-right:0}
.grid tbody tr:nth-child(-n+2) td,.grid td:nth-child(3),.grid td:nth-child(5),.grid td:nth-child(6),.grid td:nth-child(8),.grid td:nth-child(9),.grid td:nth-child(10),.grid td:nth-child(12){letter-spacing:1.200px}
.grid td:nth-child(17){letter-spacing:.4px}
.grid th{font-weight:400;padding:0;background:#f5f6f8;text-align:center;line-height:17px;color:#333944}
.grid thead th{height:19px;border-right:1px solid #bcc3d4;border-bottom:1px solid #a3acc2}
.grid thead th:last-child{border-right:0}
.grid tbody th{border-right:1px solid #bcc3d4;border-bottom:1px solid #c4cbdc;height:26px}
.corner{position:relative}
.corner i{position:absolute;left:13px;top:5px;width:0;height:0;border-left:10px solid transparent;border-bottom:10px solid #c8ccd2}
.grid thead .hsel{background:#d0d4db;color:#21b57c;border-bottom:2px solid #21b57c}
.grid tbody .rsel{background:#d0d4db;color:#21b57c;border-right:2px solid #21b57c}
.flag::before{content:"";position:absolute;left:0;top:0;border-top:5px solid #21a86f;border-right:5px solid transparent}
.sel::after{content:"";position:absolute;left:-2px;top:-2px;right:-2px;bottom:-1px;border:3px solid #21b57c;z-index:2}
.sel::before{content:"";position:absolute;right:-4px;bottom:-3px;width:6px;height:6px;background:#21b57c;z-index:3}
.vscroll{flex:1;background:#f5f6f8;border-left:1px solid #e5e7eb;display:flex;flex-direction:column;align-items:flex-end;padding-top:6px}
.vscroll .split{width:8px;height:4px;border-top:1px solid #8d93a0;border-bottom:1px solid #8d93a0}
.vscroll .up{margin:13px 1px 0 0;border-left:3.500px solid transparent;border-right:3.500px solid transparent;border-bottom:4px solid #8d93a0}
.vscroll .thumb{margin-top:8px;width:9px;height:209px;border-radius:4px 0 0 4px;background:#d5d8df}
.vscroll .down{margin:546px 1px 0 0;border-left:3.500px solid transparent;border-right:3.500px solid transparent;border-top:4px solid #8d93a0}

/* sheet tabs */
.sheetbar{height:22px;display:flex;align-items:flex-start;background:#f5f6f8;position:relative}
.sheetnav{width:112px;height:22px;display:flex;align-items:center}
.sheets{display:flex;height:22px}
.st{display:flex;align-items:center;justify-content:center;background:#e5e6eb;color:#3f4552;font-size:12px;white-space:nowrap;height:22px}
.s67{width:67px}.s68{width:68px}.s69{width:69px}.s72{width:72px}.s73{width:73px}.s74{width:74px}.s79{width:79px}.s117{width:117px}.s118{width:118px}
.st.cur{background:#fff;color:#21b57c}
.st.blue{background:#bcd7ee}
.st.orange{background:#f4ad7e}
.addsheet{margin:5px 0 0 5px}
.hsplit{margin:4px 0 0 249px;width:4px;height:14px;border-left:1px solid #a4a9b4;border-right:1px solid #a4a9b4}
.htrack{margin:3px 0 0 4px;flex:1;height:15px;background:#e9eaee;display:flex;align-items:center;position:relative}
.htrack .left{margin-left:6px;border-top:3.500px solid transparent;border-bottom:3.500px solid transparent;border-right:4px solid #8d93a0}
.hthumb{margin-left:11px;width:311px;height:15px;border-radius:7px;background:#d3d6dd}

/* status */
.status{height:28px;display:flex;align-items:center;background:#f5f6f8;border-top:1px solid #e5e7eb}
.js{margin-left:8px}
.sep-d{height:16px;margin-left:15px}
.statusright{margin-left:auto;display:flex;align-items:center;height:27px;flex:none}
.s-cross{margin-left:6px}
.cr-s{margin-left:3px}
.sep-e{height:14px;margin-left:14px;background:#d8dade}
.view-on{margin-left:10px;width:23px;height:24px;background:#e0e3e8;display:flex;align-items:center;justify-content:center}
.v2{margin-left:7px}
.v3{margin-left:11px}
.sep-f{height:14px;margin-left:14px;background:#d8dade}
.pct{margin-left:10px;font:14px "Noto Sans",sans-serif;color:#454c5a;width:33px;flex:none;white-space:nowrap}
.cr-p{margin-left:2px}
.zminus{margin-left:12px;width:10px;height:3px;background:#454c5a}
.slider{margin-left:11px;width:140px;height:1px;background:#454c5a;position:relative;flex:none}
.slider i{position:absolute;left:63px;top:-6px;width:13px;height:13px;border-radius:50%;border:1px solid #454c5a;background:rgba(255,255,255,.3)}
.zplus{margin-left:12px;width:9px;height:9px;background:linear-gradient(#454c5a,#454c5a) center/9px 2px no-repeat,linear-gradient(#454c5a,#454c5a) center/2px 9px no-repeat}
.fullsc{margin:0 12px 0 13px}
.strip{height:2px;background:#1e2b36}

/* overlays */
.ime{position:absolute;left:948px;top:1011px;width:60px;height:24px;border-radius:4px;background:#fff;box-shadow:0 1px 3px rgba(0,0,0,.45);font-size:12px;line-height:24px;text-align:center;color:#333944;white-space:nowrap;z-index:5}
.arrow{position:absolute;left:1410px;top:490px;z-index:4;filter:drop-shadow(3px 3px 2px rgba(0,0,0,.4))}
.cursor{position:absolute;left:1621px;top:504px;z-index:4}
.stamp{position:absolute;left:1351px;top:903px;z-index:4}
.stamptext{font:7px "Noto Sans CJK SC",sans-serif;fill:#ee2027}
.watermark{position:absolute;left:1730px;top:991px;display:flex;z-index:6;opacity:.92}
.wmtext{display:flex;flex-direction:column;margin-left:-1px}
.wmtext b{font:700 21px/26px "Noto Sans CJK SC",sans-serif;color:#3a8fdb}
.wmtext em{font:700 17px/22px "Liberation Sans",sans-serif;color:#62c584}
```
